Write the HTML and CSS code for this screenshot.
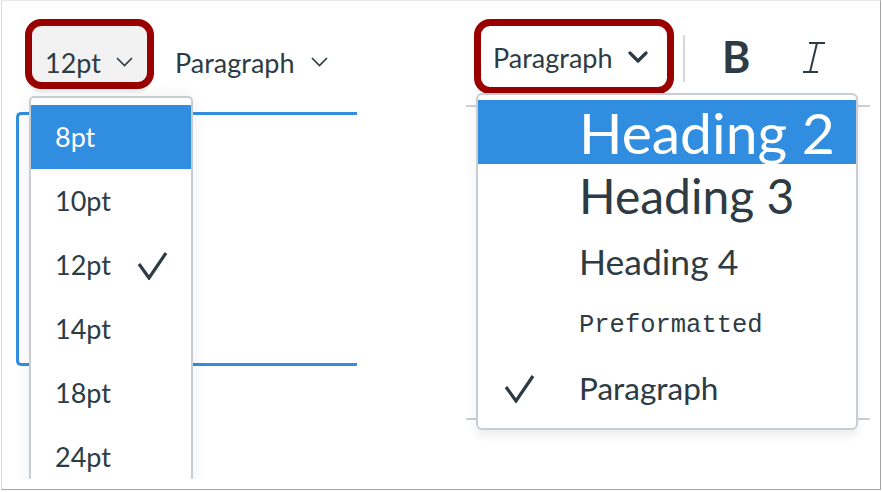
FILE: index.html
```html
<!DOCTYPE html>
<html lang="en">
<head>
  <meta charset="UTF-8">
  <title>Font size and format menus</title>
  <link rel="stylesheet" href="styles.css">
</head>
<body>
  <div class="frame">

    <!-- font size menu -->
    <section class="panel panel-left">
      <div class="toolbar">
        <button class="tbBtn sizeBtn">
          <span>12pt</span>
          <svg class="chev" width="17" height="10" viewBox="0 0 17 10"><path d="M1 1 L8.5 8.5 L16 1"/></svg>
        </button>
        <button class="tbBtn plainBtn">
          <span>Paragraph</span>
          <svg class="chev" width="17" height="10" viewBox="0 0 17 10"><path d="M1 1 L8.5 8.5 L16 1"/></svg>
        </button>
      </div>
      <div class="editor"></div>

      <ul class="menu sizeMenu">
        <li class="selected">8pt</li>
        <li>10pt</li>
        <li>12pt
          <svg class="check" width="31" height="29" viewBox="0 0 31 29"><path d="M2 13 L12 27 L29 2"/></svg>
        </li>
        <li>14pt</li>
        <li>18pt</li>
        <li>24pt</li>
      </ul>
    </section>

    <!-- block format menu -->
    <section class="panel panel-right">
      <div class="toolbar">
        <button class="tbBtn formatBtn">
          <span>Paragraph</span>
          <svg class="chevBold" width="20" height="12" viewBox="0 0 20 12"><path d="M2 2 L10 10 L18 2"/></svg>
        </button>
        <span class="divider"></span>
        <button class="iconBtn boldBtn">B</button>
        <button class="iconBtn italicBtn">
          <svg width="24" height="33" viewBox="0 0 24 33"><path d="M7 2 H23 M1 31 H16 M15 2 L8 31"/></svg>
        </button>
      </div>
      <div class="doc"></div>

      <ul class="menu formatMenu">
        <li class="selected h2"><span class="mark"></span><span>Heading 2</span></li>
        <li class="h3"><span class="mark"></span><span>Heading 3</span></li>
        <li class="h4"><span class="mark"></span><span>Heading 4</span></li>
        <li class="pre"><span class="mark"></span><span>Preformatted</span></li>
        <li class="para">
          <span class="mark">
            <svg class="check" width="31" height="29" viewBox="0 0 31 29"><path d="M2 13 L12 27 L29 2"/></svg>
          </span>
          <span>Paragraph</span>
        </li>
      </ul>
    </section>

  </div>
</body>
</html>
```

FILE: styles.css
```css
html, body {
  margin: 0;
  padding: 0;
  background: #fff;
  font-family: "Lato", "Noto Sans", sans-serif;
  color: #2d3b45;
}

.frame {
  box-sizing: border-box;
  width: 880px;
  height: 490px;
  margin-left: 1px;
  display: flex;
  border: 1px solid #a3a3a3;
  border-top-color: #e8e8e8;
  border-left-color: #dadada;
  background: #fff;
}

.panel {
  position: relative;
}
.panel-left {
  width: 355px;
  height: 478px;
  overflow: hidden;
}
.panel-right {
  width: 419px;
  margin-left: 103px;
}

/* ─────────── toolbars ─────────── */
.toolbar {
  display: flex;
  align-items: flex-start;
  padding-top: 18px;
}
.panel-left .toolbar {
  padding-left: 23px;
}
.panel-right .toolbar {
  padding-left: 14px;
}

.tbBtn {
  display: flex;
  align-items: flex-start;
  box-sizing: border-box;
  margin: 0;
  border: none;
  background: none;
  font-family: inherit;
  font-size: 27px;
  line-height: 32px;
  color: #2d3b45;
  cursor: pointer;
}

/* red annotation boxes */
.sizeBtn, .formatBtn {
  border: 7px solid #990000;
  border-radius: 16px;
}
.sizeBtn {
  width: 129px;
  height: 70px;
  padding: 21px 0 0 13px;
  gap: 15px;
  background: #f2f2f2;
  box-shadow: 0 8px 0 -4px #f2f2f2;
}
.plainBtn {
  margin-left: 21px;
  padding: 28px 0 0 0;
  gap: 16px;
}
.formatBtn {
  width: 200px;
  height: 75px;
  padding: 16px 0 0 12px;
  gap: 15px;
  background: #fff;
}

.chev {
  margin-top: 10px;
}
.chev path {
  fill: none;
  stroke: #2d3b45;
  stroke-width: 1.6;
}
.chevBold {
  margin-top: 9px;
}
.chevBold path {
  fill: none;
  stroke: #2d3b45;
  stroke-width: 3.2;
  stroke-linecap: round;
  stroke-linejoin: round;
}

.divider {
  width: 2px;
  height: 47px;
  margin: 16px 0 0 9px;
  background: #d5d9dc;
}

.iconBtn {
  margin: 0;
  padding: 0;
  border: none;
  background: none;
  color: #2d3b45;
}
.boldBtn {
  margin: 16px 0 0 37px;
  font-family: "Lato", sans-serif;
  font-weight: 700;
  font-size: 43px;
  line-height: 43px;
}
.italicBtn {
  margin: 22px 0 0 52px;
  line-height: 0;
}
.italicBtn path {
  fill: none;
  stroke: #2d3b45;
  stroke-width: 2;
}

/* ─────────── editor areas ─────────── */
.editor {
  box-sizing: border-box;
  width: 420px;
  height: 254px;
  margin: 23px 0 0 14px;
  border: 3px solid #318de0;
  border-right: none;
  border-radius: 5px 0 0 5px;
}

.doc {
  box-sizing: border-box;
  width: 404px;
  height: 315px;
  margin: 11px 0 0 6px;
  border-top: 2px solid #cbd0d4;
  border-bottom: 2px solid #cbd0d4;
}

/* ─────────── dropdown menus ─────────── */
.menu {
  position: absolute;
  margin: 0;
  padding: 0;
  list-style: none;
  background: #fff;
  border: 2px solid #c8cdd1;
  box-sizing: border-box;
}

.sizeMenu {
  left: 27px;
  top: 95px;
  width: 164px;
  padding-top: 7px;
  border-radius: 5px;
  box-shadow: 0 0 16px rgba(0,0,0,0.07);
}
.sizeMenu li {
  display: flex;
  align-items: center;
  height: 64px;
  padding-left: 24px;
  font-size: 27px;
  line-height: 64px;
}
.sizeMenu .check {
  margin-left: 26px;
}

.menu .selected {
  background: #318de0;
  color: #fff;
}

.check path {
  fill: none;
  stroke: #2d3b45;
  stroke-width: 3.2;
}

.formatMenu {
  left: 16px;
  top: 92px;
  width: 382px;
  padding: 5px 0 9px;
  border-radius: 6px;
  box-shadow: 0 6px 10px rgba(0,0,0,0.07);
}
.formatMenu li {
  display: grid;
  grid-template-columns: 101px 1fr;
  align-items: center;
  white-space: nowrap;
}
.formatMenu .mark {
  padding-left: 26px;
  line-height: 0;
}
.formatMenu .h2 {
  height: 64px;
  font-size: 57px;
  line-height: 64px;
}
.formatMenu .h3 {
  height: 64px;
  font-size: 48px;
  line-height: 64px;
}
.formatMenu .h4 {
  height: 67px;
  font-size: 35.5px;
  line-height: 67px;
}
.formatMenu .pre {
  height: 62px;
  font-family: "Liberation Mono", monospace;
  font-size: 25.5px;
  line-height: 62px;
}
.formatMenu .para {
  height: 62px;
  font-size: 31.5px;
  line-height: 62px;
}
```
